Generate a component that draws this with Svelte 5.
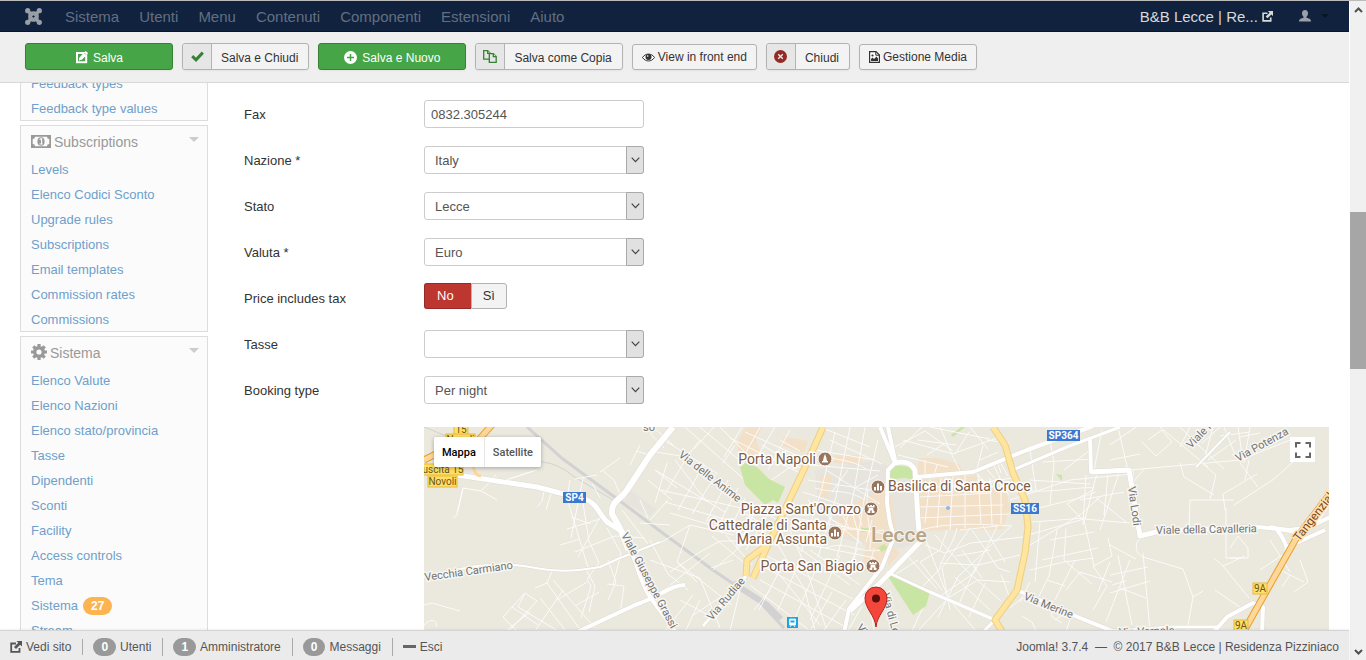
<script>
  const menu = ['Sistema', 'Utenti', 'Menu', 'Contenuti', 'Componenti', 'Estensioni', 'Aiuto'];

  const panels = [
    {
      title: '',
      icon: '',
      links: ['Feedback types', 'Feedback type values']
    },
    {
      title: 'Subscriptions',
      icon: 'money',
      links: [
        'Levels',
        'Elenco Codici Sconto',
        'Upgrade rules',
        'Subscriptions',
        'Email templates',
        'Commission rates',
        'Commissions'
      ]
    },
    {
      title: 'Sistema',
      icon: 'gear',
      links: [
        'Elenco Valute',
        'Elenco Nazioni',
        'Elenco stato/provincia',
        'Tasse',
        'Dipendenti',
        'Sconti',
        'Facility',
        'Access controls',
        'Tema',
        'Sistema',
        'Stream'
      ]
    }
  ];

  const updates = 27;

  let fax = '0832.305244';
  let priceIncludesTax = 'no';
  let mapType = 'Mappa';

  const fieldsTop = [
    { id: 'nazione', label: 'Nazione *', value: 'Italy' },
    { id: 'stato', label: 'Stato', value: 'Lecce' },
    { id: 'valuta', label: 'Valuta *', value: 'Euro' }
  ];
  const fieldsBottom = [
    { id: 'tasse', label: 'Tasse', value: '' },
    { id: 'booking', label: 'Booking type', value: 'Per night' }
  ];

  const counters = [
    { count: 0, label: 'Utenti' },
    { count: 1, label: 'Amministratore' },
    { count: 0, label: 'Messaggi' }
  ];

  // small streets, thin white lines
  const streets = [
    // west
    'M424 522M457 513l6-25 18 3 15-16M463 488l-6 27-4 3M481 491l16 9M497 483l40-13M503 481l30-10',
    'M545 487l-3 14-5 6M552 490l-6 20M570 480l-3 18 22 73M583 478l-12 60M575 479l22-4M571 517l20 7M567 529l33-10M575 552l40-16 30 2',
    'M583 503l6 38 10 22-12 16 4 7-10 32M600 517l-22 40M607 528l14 25-8 32M560 545l20-6M592 483l8 15M602 470l12 10 6 14M640 445l-10 20M600 472l20-14M650 455l-14-4',
    'M640 500l8 18M648 480l24 20M655 470l22 18M640 523l30 2M622 510l26 34',
    // south west
    'M552 571l-5 12 34 48M547 583l-12 5M553 580l42 48M563 590l-28 41M585 568l10 18-6 26M607 584l17 2-4 28M557 600l30-18M575 606l24-14',
    'M503 617l22-24 12 8-28 30M512 607l26 18M525 593l-7 14 40 24M530 612l-24 19M540 598l26 33M503 617l14 14M424 605l8-2 28 8M424 625c8-8 14-4 12 2M608 560l8 22-8 18',
    // station area
    'M660 543l30-18M650 540l18 34 20 16M668 500l-18 20M650 560l50 18 20 50M690 525l-13 37 20 20M700 552l-30 20M670 585l40-32M677 562l55 43M713 570l35-30',
    'M700 600l-14 30M680 600l34 18M693 595l-28 36M740 590l-10 41M722 596l-30 20M733 560l-22 8M700 552l20-11 45 0M712 536l36 30M726 535l26 30M690 525l44 10',
    // north west grid
    'M685 427l70 62M664 440l54 34M700 427l50 42M720 427l30 30M675 460l32 42M667 463l-12 40M690 452l-25 42M704 464l-26 46M716 474l-24 40M728 480l-22 42M738 488l-20 38M745 498l-16 34',
    'M655 470l70 42M660 490l100 22M665 502l90 26M670 513l75 22M760 427l-20 36M775 427l-22 37M790 430l-22 40M742 427l-18 30M730 438l70 35M745 432l62 28M757 490l48-33M762 445l40 24M780 440l20 11M700 440l-16 20M714 427l-20 22M735 445l-12 18',
    'M653 427l20 18M650 433l14 15M655 452l26 4M752 504l28 18M744 513l34 20M757 508l-20 40M770 510l-24 40',
    // south of the yellow road
    'M760 565l94 50M765 555l92 46M775 540l30 50 10 41M790 530l16 38 20 60M760 580l84 46M800 560l-22 50M820 560l-26 60M840 555l-30 65M780 575l40 50M795 545l55 40M785 560l-26 50M750 585l60 46M810 550l50 35M832 592l-22 39M846 600l-22 30M770 590l-16 20M862 606l-14 25M866 586l8 44',
    // centre
    'M815 450l60 10M812 465l68 6M808 480l75 12M803 492l60 20M795 518l90 16M785 540l90 18M835 432l-14 60-20 60M850 427l-14 70-18 60M865 427l-12 70-16 60M878 440l-14 60-10 60M820 427l50 20M830 440l52 24M826 470l54 34M808 500l54 44',
    'M822 455c14 6 30 4 44 14M815 488c20 6 30 0 50 12M834 505c0 10-8 20-4 34M852 500c-2 18 8 26 6 44M868 490c-4 20 4 40 2 60M840 530c14-4 24 4 44 0M826 548c20-8 34 6 54 2M878 475l-22 12M848 470l-16 22',
    'M843 516l6 12M858 512l4 14M872 520l-6 22M832 520l20 10M858 548l-8 16M874 548l-6 24',
    // east grid
    'M917 488l66-4M919 497l72-4M919 507l84-2M919 518l90-4M920 530c30-8 60-6 92-4M930 479l-5 44M941 478l-4 50M953 476l-3 54M965 474l0 54M978 474l3 50M990 478l2 46M1001 486l0 38',
    'M895 447l30-16M898 455l50 12M903 440l50 14M900 448l22-21M925 431l28 20M940 427l12 28 8 16M952 454l48-17M930 427l60 12M955 454l14-22M970 427l18 22M983 445l-6 24M987 440l22 3M998 452l-18 8M993 464l8 16M1000 462l8 14M997 461l4 12',
    'M925 460l0 16M937 465l-4 14M945 443l-18 12M918 440l38 5M975 472l14 14 20 4M1012 478l-38 6M985 467l24 28',
    // south east of centre
    'M926 540l22 58 28 33M935 535l32 36 34 30M947 530l-7 20-20 12 22 28M957 528c-4 18-14 26-18 42l-18 18M970 528l-28 40 8 42M972 530l26 38 12 4M983 526l22 36M998 525l-24 48-32 22M1010 527l-52 50-20 40M925 545l20 8 26-10 52-6M940 563l38 2 42-10M948 598l30-18 32 2M955 577l36 34M918 560l-25 16M905 553l32 36M958 606l18-40M985 583l-16 34M1001 574l8 22M960 530l38-4M962 550l20 28M990 550l-34 6M930 592l-18 39M948 598l-30 33',
    // far east
    'M1030 450l6 40M1050 440l4 24-4 40M1010 500l60-20 62-6M1020 490c30 4 60-4 74-2M1030 480l60 4M1043 462l50-3M1090 450l-26 20M1102 430l-8 40M1030 510l50-12 16-6M1032 522l54-4M1030 545l50-30 20-18M1093 490l-26 14 16 16M1096 498l30 24M1080 500l44-8M1086 475l-3 50M1097 473l-12 46M1108 475l-4 40M1120 470l-20 60M1028 535l56-16 46 4',
    'M1040 522l-5 60M1057 530l-8 46-14 28M1066 528l-2 32M1030 570l34-8 30-4M1064 560l28 24M1084 520l10 46M1093 566l14 20M1050 540l44-8M1042 560l56-12M1094 566l18-10-4-18M1030 582l-10 20M1047 580l18 6M1066 590l14-18 32 10M1075 560l-20 40M1098 592l12-30M1112 585l14-4M1107 586l-14 24',
    'M1010 608l12-10 12 4M1022 616l10 6 4 9M1036 606l14-3 2 14 10 6M1055 620l12-8M1070 620l-4 11',
    // north east
    'M1110 445l26-18M1110 460l30-6M1118 427l10 44M1133 470l0 12 12-14M1148 440l14-10 10 12-16 14-14-14M1160 427l48 40M1180 427l20 20M1190 427l-10 20M1202 443l18-16M1194 441l30 28M1213 427l-8 30M1224 427l12 30M1238 427l4 28M1250 427l-6 36M1260 433l-20 4M1220 436l30-4M1208 460l28-20',
    'M1130 470l110-10 50-20M1180 463l4 14 30 18M1200 461l16 14-6 24M1190 500l44 0M1190 500l-1 28M1225 510l-2-16 34-20M1234 505l40-26 20-18M1226 508l0 50 14 0M1230 548l8-12 10 12 0 10-18 0M1245 480l4-20M1240 463l18 24',
    'M1143 535c-10 8-8 18 0 22l40 12 10 28-6 34M1143 553l7 78M1110 545l26 14M1110 575l38-8M1110 593l40-12M1118 555l14 70M1130 560l-24 62M1120 588l26 10M1193 597l10-6M1214 558l9 8 22-10M1223 566l26 32M1260 570l30-20M1215 590l26 18M1280 570l24 12M1300 560l8 22-14 10M1290 575l-8 12M1270 540l20 32'
  ];

  // bigger white roads: [path, width]
  const roads = [
    ['M424 466l33 9 80 12 50 13c10 4 12 14 20 22l13 8 8 20', 5],
    ['M673 427l-23 28-23 35c-6 10-16 10-15 24l8 14', 6],
    ['M620 527c14 20 16 48 30 70l25 34', 4],
    ['M424 577c30-6 54-14 79-12 30-2 42 12 97 2l20-9 40-16', 2],
    ['M575 633l60-28c24-8 36-20 50-20', 4],
    ['M746 576l-43 50', 3],
    ['M880 427l15 36-7 7-1 33 3 20 4 14-12 30-33 42-5 24', 4],
    ['M895 463q14-4 20 7l3 50 2 22-40 41-30 28', 5],
    ['M888 427l8 38', 4],
    ['M917 477l56-5 54-22 66-24', 4],
    ['M1013 470l54-23 53-20', 3],
    ['M1090 437l1 35 39-2', 4],
    ['M1091 472l38-2 11 66 20-5 97-4', 5],
    ['M1257 527l33 3 20-3 20-10', 4],
    ['M887 572l43 20 65 28-14 14', 3],
    ['M1017 590l63 28 40 16', 4],
    ['M1110 631l63-4 44 0', 3],
    ['M1213 633l14-16 26-14 10 4-1 26', 4],
    ['M1230 432l-34 35', 2],
    ['M1276 528c10 14 16 24 4 34M1270 527l30 6 14-8 14-20M1285 548l40-18', 4]
  ];

  const yellow = [
    'M823 427l-16 36-40 84-14 31',
    'M767 545l-20 15-1 16',
    'M993 427l12 18 8 28 12 27 3 27-3 26-8 37-22 30 8 13'
  ];

  const roadNames = [
    { text: 'Via delle Anime', x: 678, y: 456, angle: 38 },
    { text: 'Vecchia Carmiano', x: 425, y: 581, angle: -8 },
    { text: 'Viale Giuseppe Grassi', x: 621, y: 535, angle: 62 },
    { text: 'Via Rudiae', x: 712, y: 621, angle: -50 },
    { text: 'Via Lodi', x: 1128, y: 487, angle: 82 },
    { text: 'Viale della Cavalleria', x: 1156, y: 534, angle: -1 },
    { text: 'Via Potenza', x: 1238, y: 462, angle: -29 },
    { text: 'Viale Roma', x: 1191, y: 449, angle: -46 },
    { text: 'Via Merine', x: 1023, y: 599, angle: 22 },
    { text: 'Via Vernole', x: 1119, y: 636, angle: -2 },
    { text: 'Via di Lecce', x: 882, y: 594, angle: 75 },
    { text: 'Viale', x: 856, y: 628, angle: 50 }
  ];

  const places = [
    { lines: ['Porta Napoli'], x: 816, y: 464, icon: 'tower', ix: 825, iy: 459 },
    { lines: ["Piazza Sant'Oronzo"], x: 861, y: 514, icon: 'castle', ix: 871, iy: 509 },
    { lines: ['Cattedrale di Santa', 'Maria Assunta'], x: 827, y: 530, icon: 'church', ix: 835, iy: 533 },
    { lines: ['Porta San Biagio'], x: 864, y: 571, icon: 'castle', ix: 873, iy: 566 },
    { lines: ['Basilica di Santa Croce'], x: 888, y: 491, icon: 'church', ix: 878, iy: 487, start: true }
  ];

  const shields = [
    { text: '15', x: 454, y: 424, w: 14, kind: 'exit' },
    { text: 'Novoli', x: 446, y: 434, w: 29, kind: 'exit' },
    { text: 'uscita 15', x: 423, y: 464, w: 40, kind: 'exit' },
    { text: 'Novoli', x: 428, y: 476, w: 29, kind: 'exit' },
    { text: 'SP4', x: 563, y: 492, w: 23, kind: 'road' },
    { text: 'SP364', x: 1047, y: 430, w: 33, kind: 'road' },
    { text: 'SS16', x: 1011, y: 503, w: 28, kind: 'road' },
    { text: '9A', x: 1253, y: 583, w: 14, kind: 'exit' },
    { text: '9A', x: 1234, y: 620, w: 14, kind: 'exit' }
  ];
</script>

{#snippet outLink(size)}
  <svg width={size} height={size} viewBox="0 0 12 12" aria-hidden="true">
    <path d="M6 2.500H1.200v8.300h8.300V7" fill="none" stroke="currentColor" stroke-width="1.800" />
    <path d="M6.500 0H12v5.500L10.200 3.700 6 8 4 6l4.300-4.200z" fill="currentColor" />
  </svg>
{/snippet}

{#snippet selectField(field)}
  <div class="row">
    <label for={field.id}>{field.label}</label>
    <span class="select">
      <select id={field.id}>
        <option>{field.value}</option>
      </select>
      <span class="arrow">
        <svg width="9" height="6" viewBox="0 0 9 6" aria-hidden="true">
          <path d="M.7.7l3.800 4 3.800-4" fill="none" stroke="#444" stroke-width="1.200" />
        </svg>
      </span>
    </span>
  </div>
{/snippet}

<div class="window">
  <div class="page">
    <nav class="navbar">
      <a class="logo" href="#home" aria-label="Joomla">
        <svg width="17" height="17" viewBox="0 0 17 17" aria-hidden="true">
          <g fill="currentColor">
            <circle cx="2.700" cy="2.700" r="2.600" />
            <circle cx="14.300" cy="2.700" r="2.600" />
            <circle cx="2.700" cy="14.300" r="2.600" />
            <circle cx="14.300" cy="14.300" r="2.600" />
          </g>
          <g fill="none" stroke="currentColor" stroke-width="2.600">
            <path d="M2.700 2.700C5 6 6 4.500 8.500 4.500S12 6 14.300 2.700" />
            <path d="M2.700 14.300C5 11 6 12.500 8.500 12.500s3.500-1.500 5.800 1.800" />
            <path d="M2.700 2.700C6 5 4.500 6 4.500 8.500S6 12 2.700 14.300" />
            <path d="M14.300 2.700C11 5 12.500 6 12.500 8.500s-1.500 3.500 1.800 5.800" />
          </g>
          <g fill="none" stroke="currentColor" stroke-width="1.700">
            <path d="M4 4l3.300 3.300M13 4L9.700 7.300M4 13l3.300-3.300M13 13L9.700 9.700" />
            <path d="M8.500 6l2.500 2.500L8.500 11 6 8.500z" />
          </g>
        </svg>
      </a>
      <ul>
        {#each menu as item}
          <li><a href="#{item}">{item}</a></li>
        {/each}
      </ul>
      <a class="site" href="#site">B&amp;B Lecce | Re... {@render outLink(11)}</a>
      <a class="user" href="#user" aria-label="User">
        <svg width="12" height="12" viewBox="0 0 12 12" aria-hidden="true">
          <path d="M6 0c2 0 3 1.300 3 3.300 0 1.500-.6 2.700-1.500 3.400v1C9.500 8.300 12 9 12 11v.6H0V11c0-2 2.500-2.700 4.500-3.300v-1C3.600 6 3 4.800 3 3.300 3 1.300 4 0 6 0z" fill="currentColor" />
        </svg>
        <span class="caret"></span>
      </a>
    </nav>

    <div class="toolbar">
      <button class="btn success">
        <svg width="13" height="13" viewBox="0 0 13 13" aria-hidden="true">
          <path d="M1 1h11.200v11.200H1z" fill="#fff" />
          <path d="M3 3h5L4.500 7 3.800 9.500 6.500 8.800 10.200 5.500v4.700H3z" fill="#46a546" />
          <path d="M10.700 0L13 2.300 7 8.500l-3.200 1 1-3.300z" fill="#fff" />
          <path d="M9.500 2.200l1.500 1.500" stroke="#46a546" stroke-width=".7" />
        </svg>
        Salva
      </button>
      <button class="btn split">
        <span class="icon">
          <svg width="13" height="11" viewBox="0 0 13 11" aria-hidden="true">
            <path d="M1.200 5.200L5 8.800l6.800-7.200" fill="none" stroke="#378137" stroke-width="3" />
          </svg>
        </span>
        <span class="text">Salva e Chiudi</span>
      </button>
      <button class="btn success">
        <svg width="13" height="13" viewBox="0 0 13 13" aria-hidden="true">
          <circle cx="6.500" cy="6.500" r="6.500" fill="#fff" />
          <path d="M6.500 3v7M3 6.500h7" stroke="#46a546" stroke-width="1.500" />
        </svg>
        Salva e Nuovo
      </button>
      <button class="btn split">
        <span class="icon">
          <svg width="14" height="13" viewBox="0 0 14 13" aria-hidden="true">
            <g fill="#e6e6e6" stroke="#378137" stroke-width="1.300">
              <path d="M.7.7h4l2.600 2.600v5.900H.7z" />
              <path d="M4.700.7v2.600h2.600" />
              <path d="M6.300 3.700h4l2.900 2.900v5.700H6.300z" />
              <path d="M10.300 3.700v2.900h2.900" />
            </g>
          </svg>
        </span>
        <span class="text">Salva come Copia</span>
      </button>
      <button class="btn plain">
        <svg width="13" height="9" viewBox="0 0 13 9" aria-hidden="true">
          <path d="M.5 4.500c3-4.600 9-4.600 12 0-3 4.600-9 4.600-12 0z" fill="#fff" stroke="#333" />
          <circle cx="6.500" cy="4" r="3" fill="#333" />
          <circle cx="5.700" cy="3" r=".8" fill="#fff" />
        </svg>
        View in front end
      </button>
      <button class="btn split">
        <span class="icon">
          <svg width="13" height="13" viewBox="0 0 13 13" aria-hidden="true">
            <circle cx="6.500" cy="6.500" r="6.500" fill="#942a25" />
            <path d="M4.200 4.200l4.600 4.600M8.800 4.200L4.200 8.800" stroke="#eee" stroke-width="1.300" />
          </svg>
        </span>
        <span class="text">Chiudi</span>
      </button>
      <button class="btn plain">
        <svg width="11" height="12" viewBox="0 0 11 12" aria-hidden="true">
          <path d="M.6.600h6.400l3.400 3.400v7.400H.6z" fill="#fff" stroke="#333" stroke-width="1.200" />
          <path d="M6.800.6v3.600h3.600" fill="none" stroke="#333" />
          <path d="M2 10V8l1.500-1.500L5 8l2.500-2.500L9 7.500V10z" fill="#333" />
          <circle cx="3.500" cy="4.500" r="1.100" fill="#333" />
        </svg>
        Gestione Media
      </button>
    </div>

    <main>
      <aside>
        {#each panels as panel}
          <section class="panel" class:headless={!panel.title}>
            {#if panel.title}
              <h3>
                {#if panel.icon === 'money'}
                  <svg width="20" height="13" viewBox="0 0 20 13" aria-hidden="true">
                    <path d="M0 0h20v13H0z" fill="#999" />
                    <path d="M4 1.700h12a2.300 2.300 0 0 0 2.300 2.300v5a2.300 2.300 0 0 0-2.300 2.300H4A2.300 2.300 0 0 0 1.700 9V4A2.300 2.300 0 0 0 4 1.700z" fill="#fbfbfb" />
                    <ellipse cx="10" cy="6.500" rx="3.600" ry="4.300" fill="#999" />
                    <path d="M8.700 4.700l1-.9h.9v5M8.500 9h3.200" fill="none" stroke="#fbfbfb" stroke-width="1.200" />
                  </svg>
                {:else}
                  <svg width="16" height="16" viewBox="0 0 16 16" aria-hidden="true">
                    <circle cx="8" cy="8" r="4.300" fill="none" stroke="#999" stroke-width="3.400" />
                    <path d="M8 0v3M8 13v3M0 8h3M13 8h3M2.300 2.300l2.200 2.200M11.500 11.500l2.200 2.200M13.700 2.300l-2.200 2.200M4.500 11.500l-2.200 2.200" stroke="#999" stroke-width="3.200" />
                  </svg>
                {/if}
                <span>{panel.title}</span>
                <i></i>
              </h3>
            {/if}
            <ul>
              {#each panel.links as link}
                <li>
                  <a href="#{link}">{link}</a>
                  {#if link === 'Sistema'}<span class="badge warning">{updates}</span>{/if}
                </li>
              {/each}
            </ul>
          </section>
        {/each}
      </aside>

      <form>
        <div class="row">
          <label for="fax">Fax</label>
          <input id="fax" type="text" bind:value={fax} />
        </div>
        {#each fieldsTop as field}
          {@render selectField(field)}
        {/each}
        <div class="row" role="radiogroup" aria-labelledby="tax-label">
          <span class="label" id="tax-label">Price includes tax</span>
          <div class="btn-group">
            <label class="no" class:active={priceIncludesTax === 'no'}>
              <input type="radio" name="tax" value="no" bind:group={priceIncludesTax} />No
            </label>
            <label class="yes" class:active={priceIncludesTax === 'yes'}>
              <input type="radio" name="tax" value="yes" bind:group={priceIncludesTax} />Sì
            </label>
          </div>
        </div>
        {#each fieldsBottom as field}
          {@render selectField(field)}
        {/each}

        <div class="map">
          <svg class="tiles" viewBox="424 427 905 260" role="img" aria-label="Lecce">
            <path d="M424 427h905v260H424z" fill="#ebe8de" />
            <path d="M815 470l60-10 20 10 22 0 3 72-30 10-70-20z M630 490l26 20-6 6-26-14z" fill="#e6e4dd" />

            <!-- built-up areas -->
            <g fill="#f3e0c9">
              <path d="M738 440l8-13 16 0-6 12 4 12-10 14-12-8z" />
              <path d="M784 437l24 4-4 12-24-8z" />
              <path d="M820 476l12-2-4 24-8-2z" />
              <path d="M834 455l28 0 0 10-28-2z" />
              <path d="M840 508l22-8 22-12 6 38-4 30-10 20-14-8 4-26-30-10z" />
              <path d="M880 495h12l4 40-14 24z" />
              <path d="M919 458l18 0 22 6 4 8-46 4z" />
              <path d="M918 480l58-5 8 12 22 4 4 18-8 20-84 2z" />
              <path d="M890 545l10 8-12 14z" />
            </g>

            <!-- parks -->
            <g fill="#c9e5a4">
              <path d="M888 483v-12q4-6 14-5 10 0 12 6l1 8-10-2-10 1z" />
              <path d="M951 435l10-8h4l-12 10z" />
              <path d="M1056 474l6 1v6z" />
              <path d="M878 548l6-4 4 4-6 4z M861 528h8v4h-8z" />
            </g>

            <!-- railway -->
            <g fill="none" stroke="#d2d2d2">
              <path d="M527 427l36 32 57 42 40 30 53 39 47 32 24 26" stroke-width="3" />
              <path d="M424 427l30 12 89 23q16 2 30 14l40 24" stroke-width="1" />
              <path d="M733 583l34 22 14 14" stroke-width="6" />
            </g>

            <g fill="none" stroke="#fff" stroke-width="1" opacity=".85">
              {#each streets as d}
                <path {d} />
              {/each}
            </g>

            <!-- parks without streets across them -->
            <g fill="#c9e5a4">
              <path d="M740 467l5-4 12 4 12 12 16 8-7 16-5-3-8 5-20-20z" />
              <path d="M887 575h7l36 17-4 14-13 9z" />
            </g>

            <g fill="none" stroke-linejoin="round">
              {#each roads as [d, width]}
                <path {d} stroke="#dedbd2" stroke-width={width + 1} />
              {/each}
              {#each roads as [d, width]}
                <path {d} stroke="#fff" stroke-width={width} />
              {/each}
              {#each yellow as d}
                <path {d} stroke="#edcf84" stroke-width="7" />
              {/each}
              {#each yellow as d}
                <path {d} stroke="#ffe59e" stroke-width="5" />
              {/each}
              <path d="M474 445l18-20M424 460l20-10M1329 495l-32 42-30 53-28 50" stroke="#e6a02c" stroke-width="7" />
              <path d="M474 445l18-20M424 460l20-10M1329 495l-32 42-30 53-28 50" stroke="#ffd798" stroke-width="5" />
              <path d="M473 466q2 10 8 10" stroke="#ffd798" stroke-width="3" />
            </g>

            <g class="road-name">
              {#each roadNames as name}
                <text transform="translate({name.x} {name.y}) rotate({name.angle})">{name.text}</text>
              {/each}
              <text x="643" y="431">so</text>
              <text class="highway" transform="translate(1299 542) rotate(-52)">Tangenziale Est</text>
            </g>

            {#each shields as s}
              <g class="shield {s.kind}">
                <rect x={s.x} y={s.y} width={s.w} height="11" />
                <text x={s.x + s.w / 2} y={s.y + 9}>{s.text}</text>
              </g>
            {/each}

            <text class="city" x="871" y="542">Lecce</text>

            {#each places as p}
              {#each p.lines as line, i}
                <text class="place" class:start={p.start} x={p.x} y={p.y + i * 14}>{line}</text>
              {/each}
              <g transform="translate({p.ix} {p.iy})">
                <circle r="7" fill="#99755d" stroke="#fff" stroke-width="1" />
                {#if p.icon === 'tower'}
                  <path d="M0-5l1.200 3 .8 4h1v1.500h-6V2h1l.8-4z" fill="#fff" />
                {:else if p.icon === 'church'}
                  <path d="M-4 3.500V0h2v3.500zM-1 3.500V-3L0-4l1 1v6.500zM2 3.500V-1h2v4.500z" fill="#fff" />
                {:else}
                  <path d="M-3.500-4H-2v1h1.200v-1H.8v1H2v-1h1.500v2.500H-3.500zM-2.200-1h4.400l.5 3h.8v2h-7V2h.8z" fill="#fff" />
                  <path d="M-.7 4V2a.7.7 0 0 1 1.400 0v2z" fill="#99755d" />
                {/if}
              </g>
            {/each}

            <g>
              <rect x="787" y="617" width="11" height="11" fill="#17a5ea" />
              <path d="M789.500 619h6v6h-6zM790 627l1.200-2M795 627l-1.200-2" fill="#fff" stroke="#fff" stroke-width=".8" />
              <path d="M790.500 620.500h4v2h-4z" fill="#17a5ea" />
            </g>
            <circle cx="948" cy="508" r="2" fill="#8fb7e6" />

            <path d="M876 627c-1-12-11-18-11-29a11 11 0 0 1 22 0c0 11-10 17-11 29z" fill="#f4473c" stroke="#b3261e" />
            <circle cx="876" cy="598.500" r="4" fill="#5a0f0b" />
          </svg>

          <div class="map-type">
            {#each ['Mappa', 'Satellite'] as type}
              <button type="button" class:active={mapType === type} on:click={() => (mapType = type)}>{type}</button>
            {/each}
          </div>
          <button type="button" class="fullscreen" aria-label="Fullscreen">
            <svg width="16" height="16" viewBox="0 0 16 16" aria-hidden="true">
              <path d="M1 5.500V1h4.500M10.500 1H15v4.500M15 10.500V15h-4.500M5.500 15H1v-4.500" fill="none" stroke="#666" stroke-width="2" />
            </svg>
          </button>
        </div>
      </form>
    </main>

    <footer>
      <a href="#view">{@render outLink(12)} Vedi sito</a>
      {#each counters as c}
        <a href="#{c.label}"><span class="badge">{c.count}</span>{c.label}</a>
      {/each}
      <a href="#logout"><span class="dash"></span>Esci</a>
      <p>Joomla! 3.7.4 &nbsp;—&nbsp; © 2017 B&amp;B Lecce | Residenza Pizziniaco</p>
    </footer>
  </div>

  <div class="scrollbar" aria-hidden="true">
    <svg width="9" height="6" viewBox="0 0 9 6"><path d="M1 5l3.500-3.500L8 5" fill="none" stroke="#505050" stroke-width="2" /></svg>
    <div class="track"><span></span></div>
    <svg width="9" height="6" viewBox="0 0 9 6"><path d="M1 1l3.500 3.500L8 1" fill="none" stroke="#505050" stroke-width="2" /></svg>
  </div>
</div>

<style>
  :global(body) {
    margin: 0;
    background: #fff;
  }

  .window {
    display: flex;
    height: 100vh;
    box-sizing: border-box;
    border-top: 1px solid #bbb;
    font-family: 'Liberation Sans', Arial, Helvetica, sans-serif;
    font-size: 13px;
    line-height: 18px;
    color: #333;
  }

  .page {
    flex: 1;
    min-width: 0;
    display: flex;
    flex-direction: column;
  }

  a {
    text-decoration: none;
  }

  ul {
    list-style: none;
    margin: 0;
    padding: 0;
  }

  button,
  input,
  select {
    font-family: inherit;
    font-size: 13px;
    line-height: 18px;
    box-sizing: border-box;
    margin: 0;
  }

  .navbar {
    display: flex;
    align-items: center;
    height: 30px;
    padding: 0 20px 0 25px;
    background: #10223e;
    border-bottom: 1px solid #0a1628;
    font-size: 15px;
  }

  .logo {
    display: flex;
    color: #9a9fa8;
    margin-right: 23px;
  }

  .navbar ul {
    display: flex;
    gap: 20px;
    flex: 1;
    padding-top: 2px;
  }

  .navbar li a {
    color: #636f81;
  }

  .site {
    color: #d9d9d9;
    margin-right: 26px;
    padding-top: 2px;
  }

  .user {
    display: flex;
    align-items: center;
    gap: 10px;
    color: #9a9fa8;
  }

  .caret {
    border: 4px solid transparent;
    border-top-color: #0a1424;
    border-bottom: 0;
  }

  .toolbar {
    display: flex;
    align-items: flex-end;
    gap: 9px;
    height: 51px;
    box-sizing: border-box;
    padding: 0 25px 12px;
    background: #efefef;
    border-bottom: 1px solid #d8d8d8;
  }

  .btn {
    display: flex;
    align-items: center;
    justify-content: center;
    gap: 5px;
    height: 27px;
    padding: 2px 9px 0;
    background: #f3f3f3;
    border: 1px solid #b3b3b3;
    border-radius: 3px;
    color: #333;
    font-size: 12px;
    white-space: nowrap;
    cursor: pointer;
    box-shadow: 0 1px 2px rgba(0, 0, 0, 0.05);
  }

  .btn.success {
    width: 148px;
    background: #46a546;
    border-color: #378137;
    color: #fff;
  }

  .btn.split {
    padding: 0;
    gap: 0;
    align-items: stretch;
  }

  .btn.plain {
    height: 26px;
    gap: 3px;
    padding-top: 0;
  }

  .split .icon {
    display: flex;
    align-items: center;
    justify-content: center;
    width: 28px;
    background: #e6e6e6;
    border-right: 1px solid #b3b3b3;
    border-radius: 3px 0 0 3px;
  }

  .split .text {
    padding: 5px 10px 0 9px;
  }

  main {
    flex: 1;
    min-height: 0;
    overflow: hidden;
    display: flex;
    gap: 36px;
    padding: 0 20px;
  }

  aside {
    flex: 0 0 188px;
    display: flex;
    flex-direction: column;
    gap: 4px;
    margin-top: -13px;
  }

  .panel {
    flex: none;
    background: #fbfbfb;
    border: 1px solid #ddd;
  }

  .panel.headless {
    border-top: 0;
  }

  h3 {
    display: flex;
    align-items: center;
    gap: 3px;
    height: 30px;
    margin: 0;
    padding: 0 8px 0 10px;
    font-size: 14px;
    font-weight: normal;
    color: #999;
  }

  h3 span {
    flex: 1;
    padding-top: 2px;
  }

  h3 i {
    margin-bottom: 4px;
    border: 5px solid transparent;
    border-top-color: #ccc;
    border-bottom: 0;
  }

  .panel li {
    display: flex;
    align-items: center;
    gap: 5px;
    height: 25px;
    box-sizing: border-box;
    padding: 2px 10px 0;
  }

  .panel li a {
    color: #6f9fca;
  }

  .badge {
    display: inline-block;
    padding: 0 8px;
    border-radius: 9px;
    background: #999;
    color: #fff;
    font-size: 12px;
    font-weight: bold;
    line-height: 18px;
  }

  .badge.warning {
    background: #fbb450;
  }

  form {
    flex: 1;
    min-width: 0;
    display: flex;
    flex-direction: column;
    gap: 18px;
    padding-top: 17px;
  }

  .row {
    flex: none;
    display: flex;
    align-items: center;
    height: 28px;
  }

  .row > label,
  .row > .label {
    width: 180px;
    padding-top: 2px;
  }

  input[type='text'],
  select {
    width: 220px;
    height: 28px;
    padding: 1px 6px 0;
    border: 1px solid #ccc;
    border-radius: 3px;
    background: #fff;
    color: #555;
  }

  .select {
    display: grid;
  }

  .select > * {
    grid-area: 1 / 1;
  }

  select {
    appearance: none;
    padding: 2px 28px 0 10px;
  }

  .arrow {
    display: flex;
    align-items: center;
    justify-content: center;
    justify-self: end;
    width: 18px;
    box-sizing: border-box;
    border: 1px solid #aaa;
    border-radius: 0 3px 3px 0;
    background: #e1e1e1;
    pointer-events: none;
  }

  .btn-group {
    display: flex;
    margin-bottom: 4px;
  }

  .btn-group label {
    padding: 3px 11px;
    border: 1px solid #b3b3b3;
    background: #f3f3f3;
    cursor: pointer;
  }

  .btn-group input {
    appearance: none;
    width: 0;
    height: 0;
    display: block;
  }

  .btn-group .no {
    border-right: 0;
    padding: 3px 17px 3px 12px;
    border-radius: 3px 0 0 3px;
  }

  .btn-group .yes {
    border-radius: 0 3px 3px 0;
  }

  .btn-group .no.active {
    background: #bd362f;
    border-color: #942a25;
    color: #fff;
  }

  .btn-group .yes.active {
    background: #46a546;
    border-color: #378137;
    color: #fff;
  }

  .map {
    position: relative;
    flex: none;
    margin: 5px 0 0 180px;
    font-family: Roboto, Arial, sans-serif;
  }

  .tiles {
    display: block;
    width: 100%;
  }

  .road-name text {
    font-size: 11px;
    fill: #737373;
    stroke: #f7f6f2;
    stroke-width: 3px;
    paint-order: stroke;
  }

  .road-name .highway {
    fill: #7a4a1c;
    stroke: #ffe2b3;
    font-size: 12px;
  }

  .shield text {
    font-size: 10px;
    text-anchor: middle;
  }

  .shield.road rect {
    fill: #3b78cf;
  }

  .shield.road text {
    fill: #fff;
    font-weight: bold;
  }

  .shield.exit rect {
    fill: #ffe066;
    stroke: #e6b93c;
  }

  .shield.exit text {
    fill: #6b5518;
  }

  .city {
    font-size: 21px;
    font-weight: 500;
    fill: #b5a48a;
    stroke: #f7f3ea;
    stroke-width: 2px;
    paint-order: stroke;
  }

  .place {
    font-size: 14px;
    text-anchor: end;
    fill: #7d5a44;
    stroke: #fff;
    stroke-width: 3px;
    paint-order: stroke;
  }

  .place.start {
    text-anchor: start;
  }

  .map-type {
    position: absolute;
    top: 10px;
    left: 10px;
    display: flex;
    border-radius: 2px;
    box-shadow: 0 1px 4px rgba(0, 0, 0, 0.3);
  }

  .map button {
    border: 0;
    background: #fff;
    cursor: pointer;
  }

  .map-type button {
    height: 30px;
    padding: 2px 8px 0;
    font-size: 11px;
    color: #565656;
    font-weight: 500;
    border-radius: 0 2px 2px 0;
  }

  .map-type button.active {
    color: #000;
    border-right: 1px solid #e6e6e6;
    border-radius: 2px 0 0 2px;
  }

  .fullscreen {
    position: absolute;
    top: 10px;
    right: 14px;
    display: flex;
    align-items: center;
    justify-content: center;
    width: 25px;
    height: 25px;
    padding: 0;
  }

  footer {
    position: relative;
    display: flex;
    align-items: center;
    height: 30px;
    box-sizing: border-box;
    padding: 2px 10px 0;
    background: #ebebeb;
    border-top: 1px solid #d4d4d4;
    font-size: 12px;
    color: #555;
    box-shadow: 0 0 3px rgba(0, 0, 0, 0.1);
  }

  footer a {
    display: flex;
    align-items: center;
    gap: 4px;
    margin-right: 10px;
    padding-right: 11px;
    color: #555;
    line-height: 16px;
    border-right: 1px solid #aaa;
  }

  footer a:last-of-type {
    border: 0;
  }

  footer .badge {
    border-radius: 12px;
  }

  .dash {
    width: 13px;
    height: 3px;
    background: #666;
  }

  footer p {
    margin: 0 0 0 auto;
  }

  .scrollbar {
    flex: none;
    width: 16px;
    margin-left: 1px;
    display: flex;
    flex-direction: column;
    align-items: center;
    box-sizing: border-box;
    padding: 6px 0 5px;
    background: #f0f0f0;
  }

  .track {
    flex: 1;
    width: 100%;
    margin: 5px 0;
    display: grid;
    grid-template-rows: 31% 25% 1fr;
  }

  .track span {
    grid-row: 2;
    background: #a6a6a6;
  }
</style>
